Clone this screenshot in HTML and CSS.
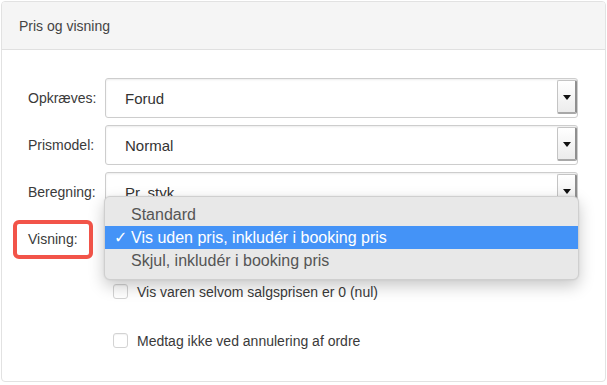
FILE: index.html
```html
<!DOCTYPE html>
<html lang="da">
<head>
<meta charset="utf-8">
<title>Pris og visning</title>
<link rel="stylesheet" href="styles.css">
</head>
<body>
<div class="panel">
  <div class="panel-header">Pris og visning</div>
  <div class="panel-body">
    <div class="form">
      <label class="label">Opkræves:</label>
      <div class="select"><span class="select-text">Forud</span><span class="select-btn"><span class="arrow"></span></span></div>

      <label class="label">Prismodel:</label>
      <div class="select"><span class="select-text">Normal</span><span class="select-btn"><span class="arrow"></span></span></div>

      <label class="label">Beregning:</label>
      <div class="select"><span class="select-text">Pr. styk</span><span class="select-btn"><span class="arrow"></span></span></div>

      <label class="label"><span class="highlight">Visning:</span></label>
      <div class="select"><span class="select-text"></span><span class="select-btn"><span class="arrow"></span></span></div>

      <ul class="menu">
        <li class="menu-item">Standard</li>
        <li class="menu-item selected"><span class="check">✓</span>Vis uden pris, inkludér i booking pris</li>
        <li class="menu-item">Skjul, inkludér i booking pris</li>
      </ul>
    </div>

    <div class="checks">
      <label class="check-row"><span class="checkbox"></span>Vis varen selvom salgsprisen er 0 (nul)</label>
      <label class="check-row"><span class="checkbox"></span>Medtag ikke ved annulering af ordre</label>
    </div>
  </div>
</div>
</body>
</html>
```
FILE: styles.css
```css
html, body {
  margin: 0;
  padding: 0;
  background: #ffffff;
}

body {
  font-family: "Liberation Sans", Arial, sans-serif;
  color: #3a3a3a;
  padding: 1px 1px 0 1px;
}

.panel {
  box-sizing: border-box;
  width: 605px;
  height: 381px;
  border: 1px solid #e2e2e2;
  border-radius: 4px;
  overflow: hidden;
  background: #fff;
}

.panel-header {
  box-sizing: border-box;
  height: 48px;
  background: #f5f5f5;
  border-bottom: 1px solid #e0e0e0;
  padding-left: 17px;
  display: flex;
  align-items: center;
  font-size: 14px;
  color: #444;
}

.panel-body {
  padding: 28px 0 0 26px;
}

.form {
  position: relative;
  display: grid;
  grid-template-columns: 77px 473px;
  grid-auto-rows: 40px;
  row-gap: 7px;
  align-items: center;
}

.label {
  font-size: 14px;
  color: #3a3a3a;
}

.highlight {
  position: relative;
}

.highlight::before {
  content: "";
  position: absolute;
  left: -15px;
  right: -15px;
  top: -11px;
  bottom: -12px;
  border: 4px solid #f25449;
  border-radius: 6px;
}

.select {
  box-sizing: border-box;
  height: 40px;
  display: flex;
  align-items: stretch;
  border: 1px solid #cdcdcd;
  border-radius: 3px;
  background: #fff;
  box-shadow: inset 0 1px 2px rgba(0, 0, 0, 0.08);
}

.select-text {
  flex: 1;
  display: flex;
  align-items: center;
  padding-left: 19px;
  font-size: 15px;
  color: #333;
  white-space: nowrap;
  overflow: hidden;
}

.select-btn {
  box-sizing: border-box;
  width: 20px;
  margin: 1px 0 3px 0;
  background: linear-gradient(#ffffff, #ececec);
  border: 1px solid #c4c4c4;
  border-right: 2px solid #8f8f8f;
  border-bottom: 2px solid #a8a8a8;
  border-radius: 2px;
  display: flex;
  align-items: center;
  justify-content: center;
}

.arrow {
  width: 0;
  height: 0;
  border-left: 4px solid transparent;
  border-right: 4px solid transparent;
  border-top: 5px solid #111;
  margin-top: 2px;
}

.menu {
  position: absolute;
  left: 76px;
  top: 118px;
  width: 475px;
  box-sizing: border-box;
  margin: 0;
  padding: 6px 0 7px;
  list-style: none;
  background: #e8e8e8;
  border: 1px solid #cfcfcf;
  border-radius: 6px;
  box-shadow: 0 6px 16px rgba(0, 0, 0, 0.22), 0 0 2px rgba(0, 0, 0, 0.1);
}

.menu-item {
  position: relative;
  height: 23px;
  line-height: 23px;
  padding-left: 26px;
  font-size: 16px;
  color: #555;
  white-space: nowrap;
}

.menu-item.selected {
  background: #4493f7;
  color: #fff;
}

.check {
  position: absolute;
  left: 9px;
  top: 0;
  font-family: "DejaVu Sans", sans-serif;
  font-size: 16px;
}

.checks {
  display: flex;
  flex-direction: column;
  gap: 34px;
  padding: 25px 0 0 85px;
}

.check-row {
  display: flex;
  align-items: center;
  gap: 9px;
  height: 15px;
  font-size: 14px;
  color: #3a3a3a;
}

.checkbox {
  box-sizing: border-box;
  width: 15px;
  height: 15px;
  border: 1px solid #d3d3d3;
  border-radius: 3px;
  background: #fff;
  box-shadow: inset 0 1px 1px rgba(0, 0, 0, 0.05);
}
```
